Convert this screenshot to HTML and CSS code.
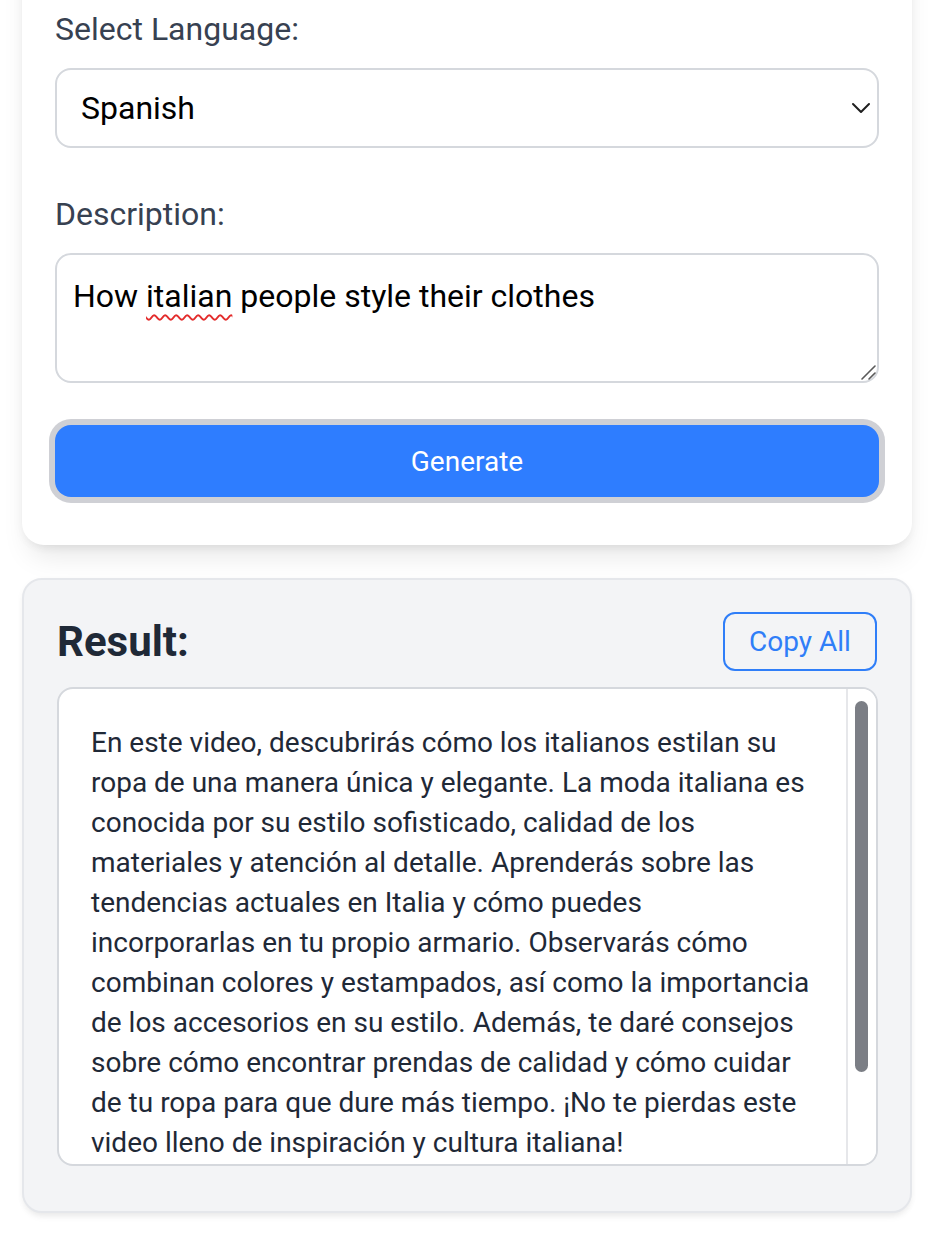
FILE: index.html
```html
<!DOCTYPE html>
<html lang="en">
<head>
<meta charset="utf-8">
<title>Description Generator</title>
<link rel="stylesheet" href="styles.css">
</head>
<body>
<div class="page">
  <section class="card form-card">
    <div class="field field-select">
      <label class="label" for="lang">Select Language:</label>
      <div class="select-wrap">
        <select class="select" id="lang">
          <option>Spanish</option>
        </select>
        <svg class="chevron" width="20" height="12" viewBox="0 0 20 12" aria-hidden="true">
          <path d="M2 2 L10 10 L18 2" fill="none" stroke="#1f1f1f" stroke-width="2" stroke-linecap="round" stroke-linejoin="round"/>
        </svg>
      </div>
    </div>
    <div class="field field-desc">
      <label class="label">Description:</label>
      <div class="textarea">How <span class="misspelled">italian</span> people style their clothes<svg class="grip" width="16" height="16" viewBox="0 0 16 16" aria-hidden="true"><path d="M2 15 L15 2 M9 15 L15 9" fill="none" stroke="#5a5a5a" stroke-width="1.6" stroke-linecap="round"/></svg></div>
    </div>
    <div class="btn-ring">
      <button class="generate">Generate</button>
    </div>
  </section>

  <section class="card result-card">
    <div class="result-head">
      <h2 class="result-title">Result:</h2>
      <button class="copy">Copy All</button>
    </div>
    <div class="result-box">
      <div class="result-scroll">
        <p class="result-text">En este video, descubrirás cómo los italianos estilan su ropa de una manera única y elegante. La moda italiana es conocida por su estilo sofisticado, calidad de los materiales y atención al detalle. Aprenderás sobre las tendencias actuales en Italia y cómo puedes incorporarlas en tu propio armario. Observarás cómo combinan colores y estampados, así como la importancia de los accesorios en su estilo. Además, te daré consejos sobre cómo encontrar prendas de calidad y cómo cuidar de tu ropa para que dure más tiempo. ¡No te pierdas este video lleno de inspiración y cultura italiana!</p>
      </div>
      <div class="scrollbar" aria-hidden="true">
        <div class="scrollbar-thumb"></div>
      </div>
    </div>
  </section>
</div>
</body>
</html>
```

FILE: styles.css
```css
* {
  box-sizing: border-box;
}

html, body {
  margin: 0;
  padding: 0;
  background: #ffffff;
}

body {
  font-family: Roboto, "Liberation Sans", sans-serif;
  color: #1f2937;
  height: 1242px;
  overflow: hidden;
}

.page {
  padding: 0 24px 0 22px;
  margin-top: -60px;
  display: flex;
  flex-direction: column;
  gap: 33px;
}

.card {
  border-radius: 22px;
}

.form-card {
  background: #ffffff;
  padding: 65px 33px 42px 33px;
  box-shadow: 0 18px 28px -8px rgba(0, 0, 0, 0.10), 0 6px 12px -6px rgba(0, 0, 0, 0.08), 0 0 14px rgba(0, 0, 0, 0.035);
}

.field {
  display: flex;
  flex-direction: column;
}

.field-select {
  margin-bottom: 42px;
}

.field-desc {
  margin-bottom: 42px;
}

.label {
  font-size: 32px;
  line-height: 48px;
  color: #374151;
  margin-bottom: 15px;
}

.select-wrap {
  position: relative;
}

.select {
  appearance: none;
  -webkit-appearance: none;
  width: 100%;
  height: 80px;
  border: 2px solid #d5d8dd;
  border-radius: 16px;
  background: #ffffff;
  font-family: Roboto, "Liberation Sans", sans-serif;
  font-size: 32px;
  color: #000000;
  padding: 0 24px;
  outline: none;
}

.chevron {
  position: absolute;
  right: 8px;
  top: 50%;
  transform: translateY(-50%);
  pointer-events: none;
}

.textarea {
  position: relative;
  height: 130px;
  border: 2px solid #d5d8dd;
  border-radius: 16px;
  background: #ffffff;
  font-size: 32px;
  line-height: 48px;
  color: #000000;
  padding: 17px 16px;
}

.misspelled {
  text-decoration: underline wavy #e32b2b;
  text-decoration-thickness: 2px;
  text-underline-offset: 7px;
}

.grip {
  position: absolute;
  right: 1px;
  bottom: 1px;
}

.btn-ring {
  border-radius: 22px;
  padding: 6px;
  margin: -6px -6px 0 -6px;
  background: #cfd0d5;
}

.generate {
  display: block;
  width: 100%;
  height: 72px;
  border: none;
  border-radius: 16px;
  background: #2e7dff;
  color: #ffffff;
  font-family: Roboto, "Liberation Sans", sans-serif;
  font-size: 28px;
  cursor: pointer;
}

.result-card {
  background: #f3f4f6;
  border: 2px solid #e5e7eb;
  border-radius: 20px;
  padding: 32px 32px 45px 33px;
  box-shadow: 0 6px 8px -4px rgba(0, 0, 0, 0.08), 0 2px 6px rgba(0, 0, 0, 0.04);
}

.result-head {
  display: flex;
  align-items: center;
  justify-content: space-between;
  margin-bottom: 16px;
}

.result-title {
  margin: 0;
  font-size: 42px;
  line-height: 48px;
  font-weight: 700;
  color: #1f2937;
}

.copy {
  width: 154px;
  height: 59px;
  margin-right: 1px;
  border: 2px solid #2f7ef8;
  border-radius: 12px;
  background: transparent;
  color: #2f7ef8;
  font-family: Roboto, "Liberation Sans", sans-serif;
  font-size: 28px;
  cursor: pointer;
}

.result-box {
  display: flex;
  height: 479px;
  background: #ffffff;
  border: 2px solid #d5d8dd;
  border-radius: 16px;
  overflow: hidden;
}

.result-scroll {
  flex: 1;
  min-width: 0;
  overflow: hidden;
  padding: 34px 36px 0 32px;
}

.result-text {
  margin: 0;
  font-size: 28px;
  line-height: 40px;
  color: #1f2937;
}

.scrollbar {
  flex: 0 0 30px;
  border-left: 2px solid #e6e7ea;
  background: #ffffff;
  padding: 12px 8px 0 7px;
}

.scrollbar-thumb {
  height: 371px;
  border-radius: 7px;
  background: #7b7e85;
}
```
